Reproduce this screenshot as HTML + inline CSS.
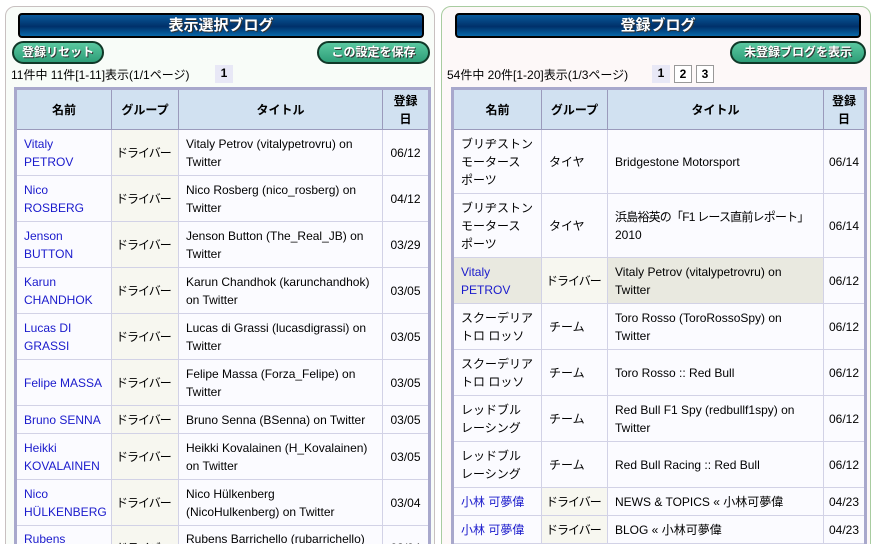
<!DOCTYPE html>
<html><head><meta charset="utf-8"><style>
*{box-sizing:border-box}
html,body{margin:0;width:876px;height:544px;overflow:hidden}
body{background:#fff;font-family:"Liberation Sans","Noto Sans CJK JP",sans-serif;font-size:12px;color:#000;position:relative}
.panel{position:absolute;top:6px;width:430px;height:560px;border:1px solid #c8b8b8;border-radius:10px}
#L{left:5px;background:#f8fcf8;border-color:#c8c0c0}
#R{left:441px;background:#fdf8f8;border-color:#a8cca0}
.bar{position:absolute;top:13px;height:25px;border:2px solid #000;border-radius:4px;background:linear-gradient(#0a5a9a,#00306a 55%,#0868a8);color:#fff;font-weight:bold;font-size:15px;text-align:center;line-height:21px;text-shadow:1px 1px 0 #333}
.btn{position:absolute;top:41px;height:23px;border:2px solid #103828;border-radius:12px;background:linear-gradient(#5ac8a0,#2e9e78);color:#fff;font-weight:bold;font-size:12px;text-align:center;line-height:19px;text-shadow:1px 1px 0 #333;white-space:nowrap}
.info{position:absolute;top:68px;font-size:12px;line-height:14px;white-space:nowrap}
.pg{position:absolute;top:65px;width:18px;height:18px;text-align:center;line-height:16px;font-weight:bold;font-size:12px}
.pg.a{background:#e8e8f6}
.pg.b{border:1px solid #999;background:#fff}
table{position:absolute;top:87px;border-collapse:collapse;border:3px solid #a8a8cc;table-layout:fixed;background:#fbfbff}
th{background:#d1e1f1;border:1px solid #9a9abc;font-weight:bold;height:41px;font-size:12px;line-height:18px;padding:0}
td{border:1px solid #d2d2e6;padding:4px 7px 4px 7px;line-height:18px;vertical-align:middle;overflow:hidden}
td.g{background:#f7f7f0;padding:0 0 0 4px;white-space:nowrap;letter-spacing:-1px}
td.n{color:#1a1acc}
td.d{text-align:center;padding:0}
tr.h1 td{height:46px}
tr.h0 td{height:28px}
tr.h3 td{height:64px}
tr.sel td{background:#e9e9e0}
tr.sel td.g{background:#f7f7f0}
</style></head><body>
<div class="panel" id="L"></div>
<div class="panel" id="R"></div>
<div class="bar" style="left:18px;width:406px">表示選択ブログ</div>
<div class="bar" style="left:455px;width:406px">登録ブログ</div>
<div class="btn" style="left:12px;width:92px">登録リセット</div>
<div class="btn" style="left:317px;width:113px">この設定を保存</div>
<div class="btn" style="left:730px;width:136px">未登録ブログを表示</div>
<div class="info" style="left:11px">11件中 11件[1-11]表示(1/1ページ)</div>
<div class="pg a" style="left:215px">1</div>
<div class="info" style="left:447px">54件中 20件[1-20]表示(1/3ページ)</div>
<div class="pg a" style="left:652px">1</div>
<div class="pg b" style="left:674px">2</div>
<div class="pg b" style="left:696px">3</div>

<table style="left:14px;width:414px">
<colgroup><col style="width:96px"><col style="width:67px"><col style="width:204px"><col style="width:47px"></colgroup>
<tr><th>名前</th><th>グループ</th><th>タイトル</th><th>登録<br>日</th></tr>
<tr class="h1"><td class="n">Vitaly PETROV</td><td class="g">ドライバー</td><td>Vitaly Petrov (vitalypetrovru) on Twitter</td><td class="d">06/12</td></tr>
<tr class="h1"><td class="n">Nico<br>ROSBERG</td><td class="g">ドライバー</td><td>Nico Rosberg (nico_rosberg) on Twitter</td><td class="d">04/12</td></tr>
<tr class="h1"><td class="n">Jenson<br>BUTTON</td><td class="g">ドライバー</td><td>Jenson Button (The_Real_JB) on Twitter</td><td class="d">03/29</td></tr>
<tr class="h1"><td class="n">Karun<br>CHANDHOK</td><td class="g">ドライバー</td><td>Karun Chandhok (karunchandhok) on Twitter</td><td class="d">03/05</td></tr>
<tr class="h1"><td class="n">Lucas DI<br>GRASSI</td><td class="g">ドライバー</td><td>Lucas di Grassi (lucasdigrassi) on Twitter</td><td class="d">03/05</td></tr>
<tr class="h1"><td class="n">Felipe MASSA</td><td class="g">ドライバー</td><td>Felipe Massa (Forza_Felipe) on Twitter</td><td class="d">03/05</td></tr>
<tr class="h0"><td class="n">Bruno SENNA</td><td class="g">ドライバー</td><td>Bruno Senna (BSenna) on Twitter</td><td class="d">03/05</td></tr>
<tr class="h1"><td class="n">Heikki<br>KOVALAINEN</td><td class="g">ドライバー</td><td>Heikki Kovalainen (H_Kovalainen) on Twitter</td><td class="d">03/05</td></tr>
<tr class="h1"><td class="n">Nico<br>HÜLKENBERG</td><td class="g">ドライバー</td><td>Nico Hülkenberg<br>(NicoHulkenberg) on Twitter</td><td class="d">03/04</td></tr>
<tr class="h1"><td class="n">Rubens<br>BARRICHELLO</td><td class="g">ドライバー</td><td>Rubens Barrichello (rubarrichello) on Twitter</td><td class="d">03/04</td></tr>
</table>

<table style="left:451px;width:413px">
<colgroup><col style="width:89px"><col style="width:66px"><col style="width:216px"><col style="width:42px"></colgroup>
<tr><th>名前</th><th>グループ</th><th>タイトル</th><th>登録<br>日</th></tr>
<tr class="h3"><td>ブリヂストン<br>モータース<br>ポーツ</td><td>タイヤ</td><td>Bridgestone Motorsport</td><td class="d">06/14</td></tr>
<tr class="h3"><td>ブリヂストン<br>モータース<br>ポーツ</td><td>タイヤ</td><td><span style="white-space:nowrap;letter-spacing:-0.8px">浜島裕英の「F1 レース直前レポート」</span><br>2010</td><td class="d">06/14</td></tr>
<tr class="h1 sel"><td class="n">Vitaly<br>PETROV</td><td class="g">ドライバー</td><td>Vitaly Petrov (vitalypetrovru) on Twitter</td><td class="d" style="background:#fbfbff">06/12</td></tr>
<tr class="h1"><td>スクーデリア<br>トロ ロッソ</td><td>チーム</td><td>Toro Rosso (ToroRossoSpy) on Twitter</td><td class="d">06/12</td></tr>
<tr class="h1"><td>スクーデリア<br>トロ ロッソ</td><td>チーム</td><td>Toro Rosso :: Red Bull</td><td class="d">06/12</td></tr>
<tr class="h1"><td>レッドブル<br>レーシング</td><td>チーム</td><td>Red Bull F1 Spy (redbullf1spy) on Twitter</td><td class="d">06/12</td></tr>
<tr class="h1"><td>レッドブル<br>レーシング</td><td>チーム</td><td>Red Bull Racing :: Red Bull</td><td class="d">06/12</td></tr>
<tr class="h0"><td class="n">小林 可夢偉</td><td class="g">ドライバー</td><td>NEWS &amp; TOPICS « 小林可夢偉</td><td class="d">04/23</td></tr>
<tr class="h0"><td class="n">小林 可夢偉</td><td class="g">ドライバー</td><td>BLOG « 小林可夢偉</td><td class="d">04/23</td></tr>
<tr class="h0"><td class="n">小林 可夢偉</td><td class="g">ドライバー</td><td>小林可夢偉</td><td class="d">04/23</td></tr>
</table>
</body></html>
